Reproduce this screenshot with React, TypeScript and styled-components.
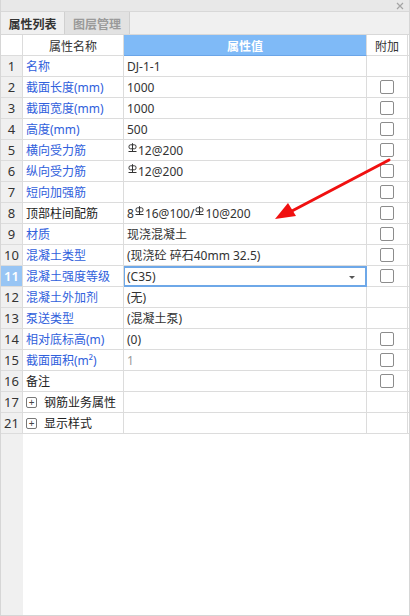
import React from 'react';
import styled, {createGlobalStyle} from "styled-components";

type RowType = {
    no: number
    name: string
    value: string
    black?: boolean
    check?: boolean
    muted?: boolean
    selected?: boolean
    expand?: boolean
}

const rows: RowType[] = [
    {no: 1, name: '名称', value: 'DJ-1-1'},
    {no: 2, name: '截面长度(mm)', value: '1000', check: true},
    {no: 3, name: '截面宽度(mm)', value: '1000', check: true},
    {no: 4, name: '高度(mm)', value: '500', check: true},
    {no: 5, name: '横向受力筋', value: 'Φ12@200', check: true},
    {no: 6, name: '纵向受力筋', value: 'Φ12@200', check: true},
    {no: 7, name: '短向加强筋', value: '', check: true},
    {no: 8, name: '顶部柱间配筋', value: '8Φ16@100/Φ10@200', black: true, check: true},
    {no: 9, name: '材质', value: '现浇混凝土', check: true},
    {no: 10, name: '混凝土类型', value: '(现浇砼 碎石40mm 32.5)', check: true},
    {no: 11, name: '混凝土强度等级', value: '(C35)', check: true, selected: true},
    {no: 12, name: '混凝土外加剂', value: '(无)'},
    {no: 13, name: '泵送类型', value: '(混凝土泵)'},
    {no: 14, name: '相对底标高(m)', value: '(0)', check: true},
    {no: 15, name: '截面面积(m²)', value: '1', check: true, muted: true},
    {no: 16, name: '备注', value: '', black: true, check: true},
    {no: 17, name: '钢筋业务属性', value: '', black: true, expand: true},
    {no: 21, name: '显示样式', value: '', black: true, expand: true},
]

const GlobalStyle = createGlobalStyle`
    html, body {
        margin: 0;
        padding: 0;
        background: #ffffff;
    }
    body {
        font-family: "Noto Sans", "Noto Sans CJK SC", sans-serif;
        font-size: 12px;
        color: #333;
    }
`

// rebar grade mark
const RebarMark = () => (
    <Mark viewBox="0 0 9 10" width={9} height={10}>
        <rect x="1" y="1.8" width="7" height="4" rx="1.6" fill="none" stroke="#333" strokeWidth="1"/>
        <line x1="4.5" y1="0.2" x2="4.5" y2="8.5" stroke="#333" strokeWidth="1"/>
        <line x1="0.5" y1="8.5" x2="8.5" y2="8.5" stroke="#333" strokeWidth="1"/>
    </Mark>
)

const renderValue = (value: string) => {
    const parts = value.split('Φ')
    return parts.map((p, i) => (
        <React.Fragment key={i}>
            {i > 0 && <RebarMark/>}
            {p}
        </React.Fragment>
    ))
}

export default function App() {
    return (
        <>
            <GlobalStyle/>
            <Panel>
                <TitleBar>
                    <svg width="8" height="8" viewBox="0 0 8 8">
                        <path d="M1 1L7 7M7 1L1 7" stroke="#a4a4a4" strokeWidth="1.2"/>
                    </svg>
                </TitleBar>
                <TabBar>
                    <Tab active>属性列表</Tab>
                    <Tab>图层管理</Tab>
                </TabBar>
                <Grid>
                    <IndexCell head/>
                    <HeadCell>属性名称</HeadCell>
                    <HeadCell blue>属性值</HeadCell>
                    <HeadCell>附加</HeadCell>
                    <Spacer/>
                    {rows.map(r => (
                        <React.Fragment key={r.no}>
                            <IndexCell selected={r.selected}>{r.no}</IndexCell>
                            <NameCell black={r.black}>
                                {r.expand && <PlusBox>+</PlusBox>}
                                {r.name}
                            </NameCell>
                            <ValueCell muted={r.muted} selected={r.selected}>
                                {renderValue(r.value)}
                                {r.selected && <Caret/>}
                            </ValueCell>
                            <ExtraCell>{r.check && <CheckBox/>}</ExtraCell>
                            <Spacer/>
                        </React.Fragment>
                    ))}
                </Grid>
                <Filler/>
                <Arrow width="410" height="616" viewBox="0 0 410 616">
                    <line x1="389" y1="160" x2="290" y2="212" stroke="#f01010" strokeWidth="3" strokeLinecap="round"/>
                    <polygon points="275,219 288,203 296,216" fill="#f01010"/>
                </Arrow>
            </Panel>
        </>
    )
}

const Panel = styled.div`
    position: relative;
    width: 410px;
    height: 616px;
    box-sizing: border-box;
    border-left: 1px solid #d6d6d6;
    border-right: 1px solid #d6d6d6;
    border-bottom: 1px solid #d6d6d6;
    display: flex;
    flex-direction: column;
    background: #ffffff;
    overflow: hidden;
`

const TitleBar = styled.div`
    height: 12px;
    box-sizing: border-box;
    background: #e8e8e8;
    border-bottom: 1px solid #d8d8d8;
    display: flex;
    justify-content: flex-end;
    align-items: center;
    padding-right: 5px;
`

const TabBar = styled.div`
    height: 23px;
    box-sizing: border-box;
    background: #f0f0f0;
    border-bottom: 1px solid #d8d8d8;
    display: flex;
`

const Tab = styled.div<{ active?: boolean }>`
    width: ${p => p.active ? '64px' : '65px'};
    box-sizing: border-box;
    display: flex;
    align-items: center;
    justify-content: center;
    font-family: "Noto Sans CJK SC", sans-serif;
    font-size: 12px;
    font-weight: 600;
    color: ${p => p.active ? '#333' : '#9a9a9a'};
    background: ${p => p.active ? '#f0f0f0' : '#e2e2e2'};
    border-right: 1px solid #d0d0d0;
`

const Grid = styled.div`
    display: grid;
    grid-template-columns: 22px 101px 243px 41px 1px;
    grid-auto-rows: 21px;
`

const Cell = styled.div`
    box-sizing: border-box;
    border-right: 1px solid #dcdcdc;
    border-bottom: 1px solid #dcdcdc;
    display: flex;
    align-items: center;
    white-space: nowrap;
    overflow: hidden;
`

const IndexCell = styled(Cell)<{ head?: boolean, selected?: boolean }>`
    justify-content: center;
    font-size: 13px;
    background: ${p => p.selected ? '#98c5f4' : p.head ? '#ffffff' : '#f0f0f0'};
    color: ${p => p.selected ? '#ffffff' : '#333'};
    font-weight: ${p => p.selected ? 600 : 400};
`

const HeadCell = styled(Cell)<{ blue?: boolean }>`
    justify-content: center;
    font-family: "Noto Sans CJK SC", sans-serif;
    font-size: 12px;
    color: ${p => p.blue ? '#ffffff' : '#333'};
    font-weight: ${p => p.blue ? 600 : 400};
    background: ${p => p.blue ? '#7fbaf7' : '#ffffff'};
    border-bottom-color: ${p => p.blue ? '#6aa5e8' : '#dcdcdc'};
`

const NameCell = styled(Cell)<{ black?: boolean }>`
    padding-left: 3px;
    color: ${p => p.black ? '#222' : '#3060dc'};
`

const ValueCell = styled(Cell)<{ muted?: boolean, selected?: boolean }>`
    position: relative;
    padding-left: 3px;
    color: ${p => p.muted ? '#9a9a9a' : '#333'};
    ${p => p.selected && `
        border: 2px solid #6ea8e8;
        border-left-width: 1px;
        padding-left: 2px;
    `}
`

const Caret = styled.span`
    position: absolute;
    right: 10px;
    top: 8px;
    width: 0;
    height: 0;
    border-left: 3px solid transparent;
    border-right: 3px solid transparent;
    border-top: 3px solid #555;
`

const ExtraCell = styled(Cell)`
    justify-content: center;
`

const Spacer = styled.div`
    box-sizing: border-box;
    border-bottom: 1px solid #dcdcdc;
`

const CheckBox = styled.span`
    width: 14px;
    height: 14px;
    box-sizing: border-box;
    border: 1px solid #8c8c8c;
    border-radius: 2px;
    background: #ffffff;
`

const PlusBox = styled.span`
    width: 11px;
    height: 11px;
    box-sizing: border-box;
    border: 1px solid #777;
    border-radius: 2px;
    display: inline-flex;
    align-items: center;
    justify-content: center;
    font-size: 10px;
    line-height: 9px;
    color: #444;
    margin-right: 7px;
`

const Mark = styled.svg`
    align-self: flex-start;
    margin-top: 3px;
    margin-right: 1px;
    margin-left: 1px;
`

const Filler = styled.div`
    flex: 1;
    background: linear-gradient(to right, #f0f0f0 22px, #ffffff 22px);
`

const Arrow = styled.svg`
    position: absolute;
    left: -1px;
    top: 0;
    pointer-events: none;
`
